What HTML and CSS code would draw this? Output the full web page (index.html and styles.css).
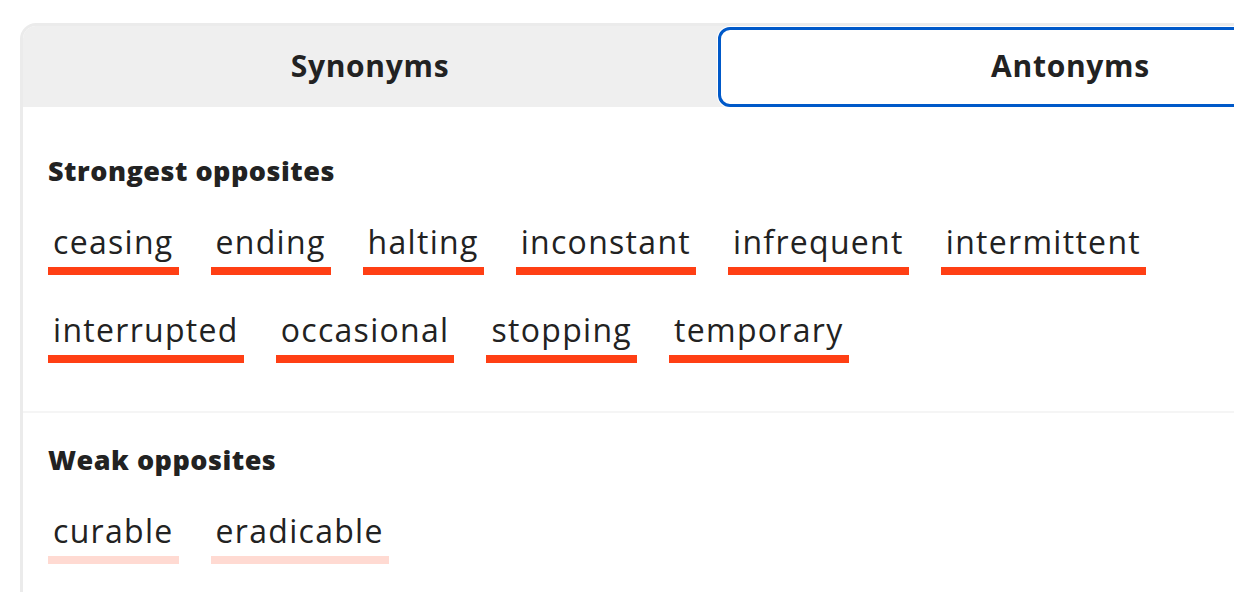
FILE: index.html
```html
<!DOCTYPE html>
<html lang="en">
<head>
<meta charset="utf-8">
<title>Antonyms</title>
<link rel="stylesheet" href="styles.css">
</head>
<body>
<div class="card">
  <div class="tabs">
    <div class="tab">Synonyms</div>
    <div class="tab tab-active">Antonyms</div>
  </div>
  <section class="group">
    <h3 class="group-title">Strongest opposites</h3>
    <ul class="words">
      <li class="word strong">ceasing</li>
      <li class="word strong">ending</li>
      <li class="word strong">halting</li>
      <li class="word strong">inconstant</li>
      <li class="word strong">infrequent</li>
      <li class="word strong">intermittent</li>
      <li class="word strong">interrupted</li>
      <li class="word strong">occasional</li>
      <li class="word strong">stopping</li>
      <li class="word strong">temporary</li>
    </ul>
  </section>
  <section class="group group-weak">
    <h3 class="group-title">Weak opposites</h3>
    <ul class="words">
      <li class="word weak">curable</li>
      <li class="word weak">eradicable</li>
    </ul>
  </section>
</div>
</body>
</html>
```
FILE: styles.css
```css
html, body {
  margin: 0;
  padding: 0;
  background: #fff;
  overflow: hidden;
}
body {
  font-family: "Open Sans", "Liberation Sans", sans-serif;
  color: #222;
}
.card {
  margin: 23px 0 0 20px;
  width: 1394px;
  border: 3px solid #ebebeb;
  border-bottom: none;
  border-radius: 16px 16px 0 0;
  box-sizing: border-box;
}
.tabs {
  display: grid;
  grid-template-columns: 1fr 1fr;
  background: #efefef;
  height: 81px;
  border-radius: 13px 13px 0 0;
}
.tab {
  display: flex;
  align-items: center;
  justify-content: center;
  padding-bottom: 3px;
  font-size: 30px;
  font-weight: 700;
  letter-spacing: 0.7px;
  color: #222;
}
.tab-active {
  background: #fff;
  border: 3px solid #0059c9;
  border-radius: 12px;
  box-shadow: 0 0 0 1px #fff;
  margin: 1px 0 0 1px;
  padding-left: 12px;
}
.group {
  padding: 47px 100px 48px 25px;
}
.group-weak {
  border-top: 2px solid #f5f5f5;
  padding-top: 30px;
}
.group-title {
  margin: 0;
  font-size: 27px;
  line-height: 34px;
  font-weight: 800;
  letter-spacing: 0.5px;
  color: #222;
}
.words {
  list-style: none;
  margin: 34px 0 0;
  padding: 0;
  display: flex;
  flex-wrap: wrap;
  column-gap: 32px;
  row-gap: 35px;
}
.word {
  font-size: 32px;
  line-height: 40px;
  letter-spacing: 1.3px;
  padding: 0 5px 5px;
  color: #222;
}
.strong {
  border-bottom: 8px solid #ff3f14;
}
.weak {
  border-bottom: 8px solid #ffdad2;
}
```
